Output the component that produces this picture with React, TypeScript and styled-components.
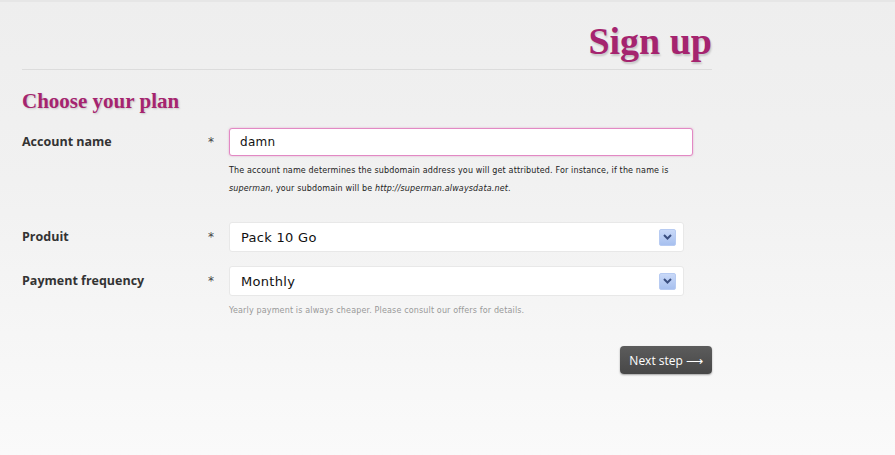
import React from "react";
import styled, { createGlobalStyle } from "styled-components";

const Global = createGlobalStyle`
  html, body { margin: 0; padding: 0; }
  body {
    min-height: 455px;
    background: linear-gradient(#eeeeee 0%, #f1f1f1 40%, #fafafa 100%);
    font-family: "Open Sans", sans-serif;
  }
`;

const Page = styled.div`
  min-height: 455px;
  border-top: 2px solid #e6e6e6;
  box-sizing: border-box;
  padding: 0 0 0 22px;
`;

const Wrap = styled.div`
  width: 690px;
`;

const Header = styled.header`
  display: flex;
  justify-content: flex-end;
  border-bottom: 1px solid #dcdcdc;
  padding: 17px 0 6px;
`;

const Title = styled.h1`
  margin: 0;
  font-family: "Liberation Serif", serif;
  font-weight: bold;
  font-size: 38px;
  line-height: 44px;
  color: #a5246f;
  text-shadow: 1px 2px 2px rgba(0, 0, 0, 0.18);
`;

const Section = styled.h2`
  margin: 18px 0 14px;
  font-family: "Liberation Serif", serif;
  font-weight: bold;
  font-size: 21px;
  line-height: 26px;
  color: #a5246f;
  text-shadow: 1px 1px 2px rgba(0, 0, 0, 0.18);
`;

const Row = styled.div<{ $gap?: number }>`
  display: grid;
  grid-template-columns: 185px 22px 1fr;
  align-items: start;
  margin-bottom: ${(p) => p.$gap ?? 0}px;
`;

const Label = styled.label<{ $h: number }>`
  font-family: "Open Sans", sans-serif;
  font-weight: bold;
  font-size: 12.5px;
  color: #333;
  line-height: ${(p) => p.$h}px;
`;

const Star = styled.span<{ $h: number }>`
  font-family: "DejaVu Sans", sans-serif;
  font-size: 12px;
  color: #444;
  line-height: ${(p) => p.$h}px;
  padding-left: 1px;
`;

const Field = styled.div``;

const Input = styled.div`
  width: 464px;
  height: 28px;
  box-sizing: border-box;
  background: #fff;
  border: 1px solid #e289c4;
  border-radius: 3px;
  box-shadow: 0 0 2px rgba(214, 90, 170, 0.5);
  padding-left: 10px;
  font-family: "DejaVu Sans", sans-serif;
  font-size: 12px;
  letter-spacing: 0.3px;
  color: #111;
  display: flex;
  align-items: center;
`;

const Help = styled.p<{ $muted?: boolean }>`
  margin: 6px 0 0;
  font-family: "DejaVu Sans", sans-serif;
  font-size: 8px;
  line-height: 18px;
  letter-spacing: 0.15px;
  color: ${(p) => (p.$muted ? "#999" : "#222")};
  em { font-style: italic; }
`;

const Select = styled.div`
  width: 455px;
  height: 30px;
  box-sizing: border-box;
  background: #fff;
  border: 1px solid #e8e8e8;
  border-radius: 3px;
  padding: 0 7px 0 11px;
  display: flex;
  align-items: center;
  justify-content: space-between;
  font-family: "DejaVu Sans", sans-serif;
  font-size: 13px;
  letter-spacing: 0.3px;
  color: #111;
`;

const Arrow = styled.span`
  width: 15px;
  height: 15px;
  border-radius: 2px;
  background: linear-gradient(#c9d9f8, #a7c0ef);
  border: 1px solid #b7cbf2;
  display: flex;
  align-items: center;
  justify-content: center;
`;

const Actions = styled.div`
  display: flex;
  justify-content: flex-end;
  margin-top: 26px;
`;

const Button = styled.button`
  height: 28px;
  padding: 0 9px;
  border: 0;
  border-radius: 4px;
  background: linear-gradient(#5c5c5c, #474747);
  box-shadow: 0 1px 2px rgba(0, 0, 0, 0.35);
  color: #fff;
  font-family: "Open Sans", sans-serif;
  font-size: 12px;
`;

const Chevron = () => (
  <svg width="9" height="6" viewBox="0 0 9 6">
    <path d="M1 1 L4.5 4.5 L8 1" fill="none" stroke="#3b4f80" strokeWidth="2" />
  </svg>
);

export default function App() {
  return (
    <>
      <Global />
      <Page>
        <Wrap>
          <Header>
            <Title>Sign up</Title>
          </Header>
          <Section>Choose your plan</Section>
          <Row $gap={24}>
            <Label $h={28}>Account name</Label>
            <Star $h={28}>*</Star>
            <Field>
              <Input>damn</Input>
              <Help>
                The account name determines the subdomain address you will get attributed. For instance, if the name is
                <br />
                <em>superman</em>, your subdomain will be <em>http://superman.alwaysdata.net</em>.
              </Help>
            </Field>
          </Row>
          <Row $gap={14}>
            <Label $h={30}>Produit</Label>
            <Star $h={30}>*</Star>
            <Select>
              <span>Pack 10 Go</span>
              <Arrow><Chevron /></Arrow>
            </Select>
          </Row>
          <Row>
            <Label $h={30}>Payment frequency</Label>
            <Star $h={30}>*</Star>
            <Field>
              <Select>
                <span>Monthly</span>
                <Arrow><Chevron /></Arrow>
              </Select>
              <Help $muted>Yearly payment is always cheaper. Please consult our offers for details.</Help>
            </Field>
          </Row>
          <Actions>
            <Button>Next step ⟶</Button>
          </Actions>
        </Wrap>
      </Page>
    </>
  );
}
